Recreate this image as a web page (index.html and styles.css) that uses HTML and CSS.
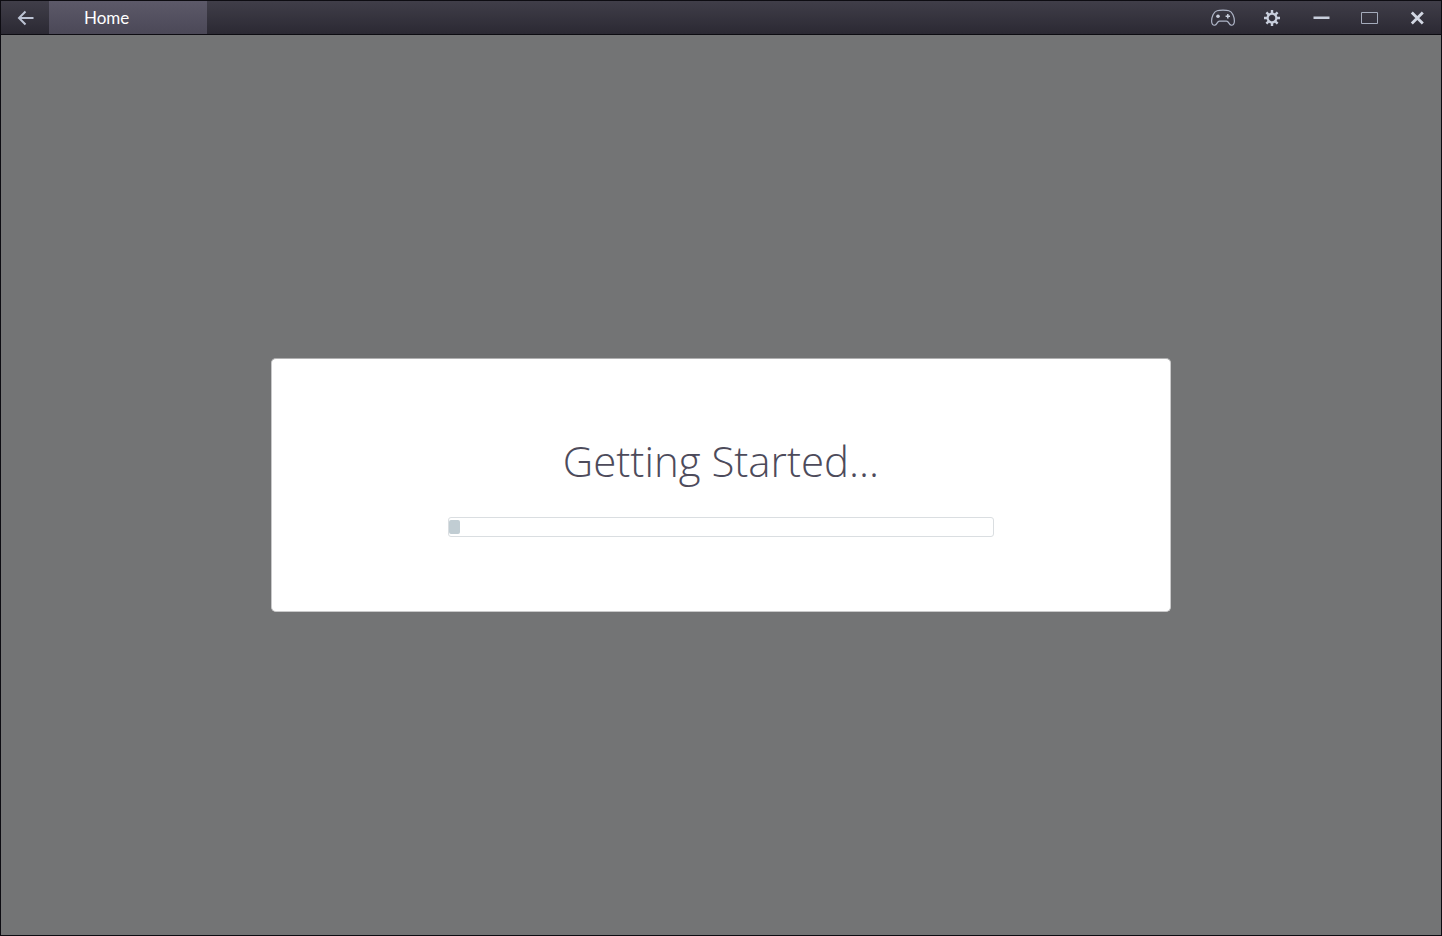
FILE: index.html
```
<!DOCTYPE html>
<html lang="en">
<head>
    <meta charset="UTF-8">
    <meta name="viewport" content="width=device-width, initial-scale=1.0">
    <title>Home</title>
    <link rel="stylesheet" href="styles.css">
</head>
<body>
    <div class="window">
        <header class="titlebar">
            <button type="button" class="bar-button" aria-label="Back">
                <svg width="20" height="20" viewBox="0 0 20 20" fill="none" stroke="#bcc3d4" stroke-width="2">
                    <path d="M18.5 10H4.5M10.5 3.5L4 10L10.5 16.5"/>
                </svg>
            </button>
            <button type="button" class="tab">Home</button>

            <div class="controls">
                <button type="button" class="bar-button" aria-label="Game controls">
                    <svg width="28" height="20" viewBox="1 0 28 20">
                        <path d="M7 2.7C9.5 1.8 16.5 1.8 19 2.7C22.5 3.8 24.3 8.8 24.4 13C24.4 16 23 17.5 21.2 17.2C18.8 16.9 19 13.2 16.5 13.2H9.5C7 13.2 7.2 16.9 4.8 17.2C3 17.5 1.6 16 1.6 13C1.7 8.8 3.5 3.8 7 2.7Z" fill="none" stroke="#aeb5c7" stroke-width="1.2"/>
                        <circle cx="8" cy="8.2" r="1.8" fill="#c9cfdd"/>
                        <path d="M17.8 6V10.4M15.6 8.2H20" fill="none" stroke="#c9cfdd" stroke-width="1.5"/>
                    </svg>
                </button>
                <button type="button" class="bar-button" aria-label="Settings">
                    <svg width="20" height="20" viewBox="-9 -10 20 20" fill="none" stroke="#c9cfdd">
                        <circle r="4.4" stroke-width="2.2"/>
                        <path d="M0-5V-8M0 5V8M-5 0H-8M5 0H8M3.6-3.6L5.6-5.6M-3.6-3.6L-5.6-5.6M3.6 3.6L5.6 5.6M-3.6 3.6L-5.6 5.6" stroke-width="2.4"/>
                    </svg>
                </button>
                <button type="button" class="bar-button" aria-label="Minimize">
                    <svg width="20" height="20" viewBox="0 0 20 20">
                        <path d="M2.5 8.5H18.5V11H2.5Z" fill="#c9cfdd"/>
                    </svg>
                </button>
                <button type="button" class="bar-button" aria-label="Maximize">
                    <svg width="20" height="20" viewBox="0 0 20 20">
                        <path d="M2.5 4.5H18.5V15.5H2.5Z" fill="none" stroke="#a4abbb"/>
                    </svg>
                </button>
                <button type="button" class="bar-button" aria-label="Close">
                    <svg width="20" height="20" viewBox="0 0 20 20">
                        <path d="M4.8 4.5L15.8 15.5M15.8 4.5L4.8 15.5" fill="none" stroke="#d2d7e3" stroke-width="2.8"/>
                    </svg>
                </button>
            </div>
        </header>

        <main class="content">
            <section class="dialog">
                <h1 class="dialog-title" id="loading-title">Getting Started...</h1>
                <progress class="loading-bar" value="2" max="100" aria-labelledby="loading-title"></progress>
            </section>
        </main>
    </div>
</body>
</html>
```
FILE: styles.css
```
* {
    box-sizing: border-box;
}
body {
    margin: 0;
    font-family: "Open Sans", "Noto Sans", sans-serif;
    background-color: #737475;
}
.window {
    display: flex;
    flex-direction: column;
    min-height: 100vh;
    border: 1px solid #0d0c12;
}
.titlebar {
    display: flex;
    height: 34px;
    border-bottom: 1px solid #0d0c12;
    background: linear-gradient(#403e49, #2b2933);
}
.bar-button {
    display: flex;
    align-items: center;
    justify-content: center;
    width: 48px;
    padding: 0;
    border: none;
    background: none;
    cursor: pointer;
}
.tab {
    width: 158px;
    padding: 0 35px;
    border: none;
    background: linear-gradient(#5c5969, #4b4857);
    color: #ffffff;
    font-family: Lato, sans-serif;
    font-size: 17px;
    text-align: left;
    cursor: pointer;
}
.controls {
    display: flex;
    margin-left: auto;
}
.content {
    display: flex;
    flex: 1;
    align-items: center;
    justify-content: center;
}
.dialog {
    display: flex;
    flex-direction: column;
    align-items: center;
    gap: 27px;
    width: 900px;
    max-width: 100%;
    padding: 72px 24px 74px;
    border: 1px solid #c9c9ca;
    border-top-color: #b0b0b1;
    border-radius: 5px;
    background-color: #ffffff;
}
.dialog-title {
    margin: 0;
    color: #4d4b5b;
    font-size: 42px;
    font-weight: 330;
    line-height: 59px;
}
.loading-bar {
    appearance: none;
    width: 546px;
    max-width: 100%;
    height: 20px;
    padding: 2px 0;
    border: 1px solid #dadee1;
    border-radius: 3px;
    background-color: #ffffff;
}
.loading-bar::-webkit-progress-bar {
    background-color: #ffffff;
}
.loading-bar::-webkit-progress-value {
    border-radius: 2px;
    background-color: #c1cdd3;
}
```
